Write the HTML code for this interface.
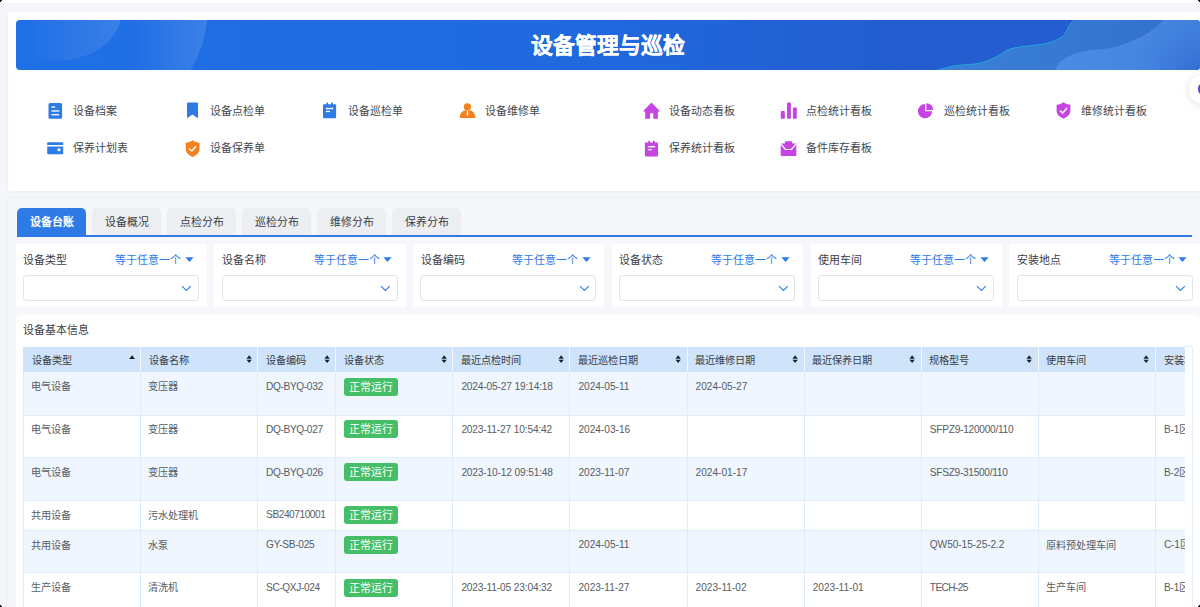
<!DOCTYPE html>
<html lang="zh-CN">
<head>
<meta charset="utf-8">
<title>设备管理与巡检</title>
<style>
*{box-sizing:border-box;margin:0;padding:0}
html,body{width:1200px;height:607px;overflow:hidden;background:#f5f6fa;font-family:"Liberation Sans",sans-serif;color:#333;font-weight:300}
body{position:relative}
.abs{position:absolute}
.topstrip{left:0;top:0;width:1200px;height:3.2px;background:#fff}
.card1{left:7.8px;top:11.7px;width:1200px;height:179.2px;background:#fff;box-shadow:0 1px 4px rgba(0,0,0,0.045)}
.banner{left:15.6px;top:19.5px;width:1184.4px;height:50.8px;border-radius:4px;overflow:hidden;background:linear-gradient(90deg,#1f70e6 0%,#2068de 50%,#235dcf 75%,#235dcf 100%)}
.banner h1{position:absolute;left:0.6px;top:1.6px;width:1184.4px;text-align:center;line-height:50.8px;font-size:21.75px;font-weight:bold;color:#fff;-webkit-text-stroke:0.3px #fff}
.navt{height:20px;line-height:20px;font-size:10.94px;color:#43474f;white-space:nowrap}
.tab{top:208.2px;width:68.8px;height:27px;line-height:28.4px;text-align:center;font-size:10.94px;color:#3b3e45;background:#eceef2;border-radius:5px 5px 0 0;white-space:nowrap}
.tab.act{background:#2e7be6;color:#fff;font-weight:bold}
.tabline{left:17.2px;top:235px;width:1174.5px;height:1.7px;background:#2e7be6}
.fcard{top:244.3px;width:191.4px;height:62.6px;background:#fff}
.flab{left:7.6px;top:5.7px;height:20px;line-height:20px;font-size:10.94px;color:#3b3e45;white-space:nowrap}
.fop{left:99.2px;top:5.7px;height:20px;line-height:20px;font-size:10.94px;color:#2e7be6;white-space:nowrap}
.fsel{left:7.4px;top:31px;width:175.9px;height:25.4px;border:0.8px solid #e0e3e9;border-radius:3.2px;background:#fff}
.card3{left:15.6px;top:315px;width:1184.8px;height:300px;background:#fff;border-radius:4.5px}
.ttl{left:23.4px;top:320.4px;height:20px;line-height:20px;font-size:10.94px;color:#3b3e45;white-space:nowrap}
.tclip{overflow:hidden}
.th{height:25.4px;line-height:27.8px;font-size:10.16px;color:#3a3d44;white-space:nowrap}
.td{height:20px;line-height:20px;font-size:10.16px;color:#585c63;white-space:nowrap}
.lat{margin-top:-0.7px;margin-left:0.9px}
.badge{width:54.2px;height:18px;line-height:18px;border-radius:3px;background:#45be68;color:#fff;font-size:10.94px;text-align:center;white-space:nowrap}
.vline{left:1192.3px;top:346.6px;width:0.8px;height:270px;background:#e4effb}
</style>
</head>
<body>
<div class="abs topstrip"></div>
<div class="abs card1"></div>
<div class="abs banner">
<svg class="abs" style="left:0;top:0" width="1184.4" height="50.8" viewBox="0 0 1184.4 50.8">
<defs>
<linearGradient id="gl1" gradientUnits="userSpaceOnUse" x1="10" y1="0" x2="105" y2="0"><stop offset="0" stop-color="#fff" stop-opacity="0"/><stop offset="1" stop-color="#fff" stop-opacity="0.12"/></linearGradient>
<linearGradient id="gl2" gradientUnits="userSpaceOnUse" x1="115" y1="0" x2="191" y2="0"><stop offset="0" stop-color="#fff" stop-opacity="0"/><stop offset="1" stop-color="#fff" stop-opacity="0.13"/></linearGradient>
<linearGradient id="ga" gradientUnits="userSpaceOnUse" x1="930" y1="50" x2="1150" y2="0"><stop offset="0" stop-color="#3a80d8"/><stop offset="1" stop-color="#3372cd"/></linearGradient>
<linearGradient id="gb" gradientUnits="userSpaceOnUse" x1="1040" y1="0" x2="1184" y2="0"><stop offset="0" stop-color="#4b8be5"/><stop offset="1" stop-color="#4383de"/></linearGradient>
<radialGradient id="gb2" gradientUnits="userSpaceOnUse" cx="1190" cy="62" r="75"><stop offset="0" stop-color="#2f68d2" stop-opacity="1"/><stop offset="1" stop-color="#3a76d8" stop-opacity="0"/></radialGradient>
</defs>
<ellipse cx="94.4" cy="-9.5" rx="97" ry="105" fill="url(#gl2)"/>
<ellipse cx="41.4" cy="-7.5" rx="64" ry="48" fill="url(#gl1)"/>
<path d="M914.4 52.5 C915.4 52.1 916.5 51.4 920.7 50.3 C924.9 49.2 932.4 46.9 939.4 45.7 C946.4 44.5 956.1 44.7 962.7 43.3 C969.3 41.9 974.0 39.8 979.1 37.5 C984.2 35.2 988.1 31.2 993.1 29.3 C998.1 27.4 1003.2 27.3 1009.4 26.3 C1015.6 25.3 1024.2 25.1 1030.4 23.5 C1036.6 21.9 1042.8 19.6 1046.7 16.5 C1050.6 13.4 1051.8 7.5 1053.7 4.8 C1055.7 2.1 1057.1 1.6 1058.4 0.2 C1059.7 -1.2 1060.9 -2.9 1061.4 -3.5 L1190 -5 L1190 60 L900 60 Z" fill="url(#ga)"/>
<path d="M914.4 52.5 C915.4 52.1 916.5 51.4 920.7 50.3 C924.9 49.2 932.4 46.9 939.4 45.7 C946.4 44.5 956.1 44.7 962.7 43.3 C969.3 41.9 974.0 39.8 979.1 37.5 C984.2 35.2 988.1 31.2 993.1 29.3 C998.1 27.4 1003.2 27.3 1009.4 26.3 C1015.6 25.3 1024.2 25.1 1030.4 23.5 C1036.6 21.9 1042.8 19.6 1046.7 16.5 C1050.6 13.4 1051.8 7.5 1053.7 4.8 C1055.7 2.1 1057.1 1.6 1058.4 0.2 C1059.7 -1.2 1060.9 -2.9 1061.4 -3.5" fill="none" stroke="#22a6de" stroke-width="1" stroke-opacity="0.95"/>
<path d="M1038.4 53.5 C1038.6 53.0 1038.7 52.2 1039.7 50.3 C1040.7 48.4 1041.7 44.7 1044.4 42.2 C1047.1 39.7 1051.4 37.1 1056.1 35.2 C1060.8 33.3 1065.8 32.2 1072.4 31.0 C1079.0 29.8 1088.7 29.7 1095.7 28.2 C1102.7 26.8 1108.2 24.8 1114.4 22.3 C1120.6 19.8 1127.7 16.5 1133.1 13.0 C1138.6 9.5 1144.2 3.9 1147.1 1.3 C1150.0 -1.3 1149.9 -1.9 1150.4 -2.5 L1190 -5 L1190 60 Z" fill="url(#gb)"/><path d="M1038.4 53.5 C1038.6 53.0 1038.7 52.2 1039.7 50.3 C1040.7 48.4 1041.7 44.7 1044.4 42.2 C1047.1 39.7 1051.4 37.1 1056.1 35.2 C1060.8 33.3 1065.8 32.2 1072.4 31.0 C1079.0 29.8 1088.7 29.7 1095.7 28.2 C1102.7 26.8 1108.2 24.8 1114.4 22.3 C1120.6 19.8 1127.7 16.5 1133.1 13.0 C1138.6 9.5 1144.2 3.9 1147.1 1.3 C1150.0 -1.3 1149.9 -1.9 1150.4 -2.5 L1190 -5 L1190 60 Z" fill="url(#gb2)"/>
<path d="M1038.4 53.5 C1038.6 53.0 1038.7 52.2 1039.7 50.3 C1040.7 48.4 1041.7 44.7 1044.4 42.2 C1047.1 39.7 1051.4 37.1 1056.1 35.2 C1060.8 33.3 1065.8 32.2 1072.4 31.0 C1079.0 29.8 1088.7 29.7 1095.7 28.2 C1102.7 26.8 1108.2 24.8 1114.4 22.3 C1120.6 19.8 1127.7 16.5 1133.1 13.0 C1138.6 9.5 1144.2 3.9 1147.1 1.3 C1150.0 -1.3 1149.9 -1.9 1150.4 -2.5" fill="none" stroke="#5a9ae8" stroke-width="0.7" stroke-opacity="0.7"/>

</svg>
<h1>设备管理与巡检</h1>
</div>
<svg class="abs" style="left:46.7px;top:102.1px" width="17" height="17" viewBox="0 0 17 17"><g transform="translate(-0.2,0.4)"><rect x="1.7" y="0.6" width="13.6" height="15.7" rx="1.5" fill="#2e7be6"/><rect x="4.6" y="4.0" width="3.8" height="1.3" fill="#fff"/><rect x="4.6" y="7.9" width="7.8" height="1.3" fill="#fff"/><rect x="4.6" y="11.7" width="7.8" height="1.3" fill="#fff"/></g></svg><div class="abs navt" style="left:72.7px;top:100.6px">设备档案</div>
<svg class="abs" style="left:184.0px;top:102.1px" width="17" height="17" viewBox="0 0 17 17"><path d="M3 1.4 Q3 0.6 3.8 0.6 H13.2 Q14 0.6 14 1.4 V16.3 L8.5 12.4 L3 16.3 Z" fill="#2e7be6"/></svg><div class="abs navt" style="left:210.3px;top:100.6px">设备点检单</div>
<svg class="abs" style="left:321.0px;top:102.1px" width="17" height="17" viewBox="0 0 17 17"><g transform="translate(0,0)"><rect x="2" y="2.3" width="13.1" height="14" rx="1" fill="#2e7be6"/><rect x="5.4" y="0.6" width="1.7" height="3" fill="#2e7be6"/><rect x="10.1" y="0.6" width="1.8" height="3" fill="#2e7be6"/><rect x="4.9" y="5.8" width="7.3" height="1.4" fill="#fff"/><rect x="4.9" y="8.8" width="4.1" height="1.3" fill="#fff"/></g></svg><div class="abs navt" style="left:347.7px;top:100.6px">设备巡检单</div>
<svg class="abs" style="left:458.9px;top:102.1px" width="17" height="17" viewBox="0 0 17 17"><circle cx="8.4" cy="4.8" r="3.65" fill="#f5821f"/><path d="M0.7 15.9 C0.7 10.8 3.6 7.9 8.5 7.9 C13.4 7.9 16.3 10.8 16.3 15.9 Q16.3 16.1 16 16.1 H1 Q0.7 16.1 0.7 15.9 Z" fill="#f5821f"/><path d="M7.7 8.2 H9.3 L9 9.3 L9.4 12.7 L8.5 14 L7.6 12.7 L8 9.3 Z" fill="#fff"/></svg><div class="abs navt" style="left:484.9px;top:100.6px">设备维修单</div>
<svg class="abs" style="left:46.5px;top:139.7px" width="17" height="17" viewBox="0 0 17 17"><g transform="translate(-0.3,-0.2)"><path d="M0.5 3.5 Q0.5 2.5 1.5 2.5 H15.5 Q16.5 2.5 16.5 3.5 V5.1 H0.5 Z" fill="#2e7be6"/><path d="M0.5 6.8 H16.5 V13.5 Q16.5 14.5 15.5 14.5 H1.5 Q0.5 14.5 0.5 13.5 Z" fill="#2e7be6"/><rect x="10.9" y="8.7" width="2.8" height="2.6" fill="#fff"/></g></svg><div class="abs navt" style="left:72.7px;top:138.2px">保养计划表</div>
<svg class="abs" style="left:183.8px;top:139.7px" width="17" height="17" viewBox="0 0 17 17"><path d="M8.6 0.3 C6.6 1.9000000000000001 4.2 2.6999999999999997 1.7 2.8 V8.700000000000001 C1.7 12.900000000000002 5.0 15.499999999999998 8.6 16.9 C12.2 15.499999999999998 15.5 12.900000000000002 15.5 8.700000000000001 V2.8 C13.0 2.6999999999999997 10.6 1.9000000000000001 8.6 0.3 Z" fill="#f5821f"/><path d="M5.4 9.0 L7.8 11.0 L11.7 6.5" fill="none" stroke="#fff" stroke-width="1.5" stroke-linecap="round" stroke-linejoin="round"/></svg><div class="abs navt" style="left:210.3px;top:138.2px">设备保养单</div>
<svg class="abs" style="left:642.7px;top:102.1px" width="17" height="17" viewBox="0 0 17 17"><path d="M8.5 0.6 L16.8 8.9 Q17 9.6 16.3 9.6 H14.9 V16.7 H10.3 V12.1 Q10.3 11.3 9.5 11.3 H7.9 Q7.1 11.3 7.1 12.1 V16.7 H2.2 V9.6 H0.7 Q0 9.6 0.2 8.9 Z" fill="#c644e2"/></svg><div class="abs navt" style="left:668.9px;top:100.6px">设备动态看板</div>
<svg class="abs" style="left:780.4px;top:102.1px" width="17" height="17" viewBox="0 0 17 17"><rect x="0.8" y="9" width="4" height="7.8" rx="0.9" fill="#c644e2"/><rect x="7" y="0.4" width="3.9" height="16.4" rx="0.9" fill="#c644e2"/><rect x="12.9" y="5.5" width="3.9" height="11.3" rx="0.9" fill="#c644e2"/></svg><div class="abs navt" style="left:806.1px;top:100.6px">点检统计看板</div>
<svg class="abs" style="left:917.2px;top:102.1px" width="17" height="17" viewBox="0 0 17 17"><path d="M8 9.2 V2.1 A7.1 7.1 0 1 0 15.1 9.2 Z" fill="#c644e2"/><path d="M9.3 7.9 V1.3 A7 6.6 0 0 1 16.3 7.9 Z" fill="#c644e2"/></svg><div class="abs navt" style="left:943.6px;top:100.6px">巡检统计看板</div>
<svg class="abs" style="left:1054.6px;top:102.1px" width="17" height="17" viewBox="0 0 17 17"><path d="M8.5 0.2 C6.5 1.8 4.1 2.6 1.6 2.7 V8.6 C1.6 12.8 4.9 15.299999999999999 8.5 16.7 C12.1 15.299999999999999 15.4 12.8 15.4 8.6 V2.7 C12.9 2.6 10.5 1.8 8.5 0.2 Z" fill="#c644e2"/><path d="M5.3 9.0 L7.7 11.1 L11.6 6.4" fill="none" stroke="#fff" stroke-width="1.5" stroke-linecap="round" stroke-linejoin="round"/></svg><div class="abs navt" style="left:1080.8px;top:100.6px">维修统计看板</div>
<svg class="abs" style="left:642.9px;top:139.7px" width="17" height="17" viewBox="0 0 17 17"><g transform="translate(-0.1,0.2)"><rect x="2" y="2.3" width="13.1" height="14" rx="1" fill="#c644e2"/><rect x="5.4" y="0.6" width="1.7" height="3" fill="#c644e2"/><rect x="10.1" y="0.6" width="1.8" height="3" fill="#c644e2"/><rect x="4.9" y="5.8" width="7.3" height="1.4" fill="#fff"/><rect x="4.9" y="8.8" width="4.1" height="1.3" fill="#fff"/></g></svg><div class="abs navt" style="left:668.9px;top:138.2px">保养统计看板</div>
<svg class="abs" style="left:780.4px;top:139.7px" width="17" height="17" viewBox="0 0 17 17"><path d="M0.7 3.9 Q0.7 3.6 1 3.6 H4.9 V2 Q4.9 1.2 5.7 1.2 H11.4 Q12.2 1.2 12.2 2 V3.6 H16 Q16.3 3.6 16.3 3.9 V14.9 Q16.3 15.9 15.3 15.9 H1.7 Q0.7 15.9 0.7 14.9 Z" fill="#c644e2"/><path d="M0.9 4 L5.5 9.5 H11.4 L16.1 4" fill="none" stroke="#fff" stroke-width="1.2" stroke-linejoin="round"/></svg><div class="abs navt" style="left:806.1px;top:138.2px">备件库存看板</div>

<div class="abs" style="left:7.8px;top:198.8px;width:1200px;height:420px;background:#f6f7fb;box-shadow:0 0 4px rgba(0,0,0,0.05)"></div>
<div class="abs tab act" style="left:17.2px">设备台账</div><div class="abs tab" style="left:92.2px">设备概况</div><div class="abs tab" style="left:167.2px">点检分布</div><div class="abs tab" style="left:242.2px">巡检分布</div><div class="abs tab" style="left:317.2px">维修分布</div><div class="abs tab" style="left:392.2px">保养分布</div>
<div class="abs tabline"></div>
<div class="abs fcard" style="left:15.60px"><div class="abs flab">设备类型</div><div class="abs fop">等于任意一个</div><svg class="abs" style="left:169px;top:13.2px" width="10" height="6" viewBox="0 0 10 6"><path d="M0.4 0.3 H8.6 L4.5 5 Z" fill="#2e7be6"/></svg><div class="abs fsel"><svg class="abs" style="left:157.5px;top:8.6px" width="11" height="7" viewBox="0 0 11 7"><path d="M1 1.2 L5.4 5.4 L9.8 1.2" fill="none" stroke="#2e7be6" stroke-width="1.1"/></svg></div></div>
<div class="abs fcard" style="left:214.35px"><div class="abs flab">设备名称</div><div class="abs fop">等于任意一个</div><svg class="abs" style="left:169px;top:13.2px" width="10" height="6" viewBox="0 0 10 6"><path d="M0.4 0.3 H8.6 L4.5 5 Z" fill="#2e7be6"/></svg><div class="abs fsel"><svg class="abs" style="left:157.5px;top:8.6px" width="11" height="7" viewBox="0 0 11 7"><path d="M1 1.2 L5.4 5.4 L9.8 1.2" fill="none" stroke="#2e7be6" stroke-width="1.1"/></svg></div></div>
<div class="abs fcard" style="left:413.10px"><div class="abs flab">设备编码</div><div class="abs fop">等于任意一个</div><svg class="abs" style="left:169px;top:13.2px" width="10" height="6" viewBox="0 0 10 6"><path d="M0.4 0.3 H8.6 L4.5 5 Z" fill="#2e7be6"/></svg><div class="abs fsel"><svg class="abs" style="left:157.5px;top:8.6px" width="11" height="7" viewBox="0 0 11 7"><path d="M1 1.2 L5.4 5.4 L9.8 1.2" fill="none" stroke="#2e7be6" stroke-width="1.1"/></svg></div></div>
<div class="abs fcard" style="left:611.85px"><div class="abs flab">设备状态</div><div class="abs fop">等于任意一个</div><svg class="abs" style="left:169px;top:13.2px" width="10" height="6" viewBox="0 0 10 6"><path d="M0.4 0.3 H8.6 L4.5 5 Z" fill="#2e7be6"/></svg><div class="abs fsel"><svg class="abs" style="left:157.5px;top:8.6px" width="11" height="7" viewBox="0 0 11 7"><path d="M1 1.2 L5.4 5.4 L9.8 1.2" fill="none" stroke="#2e7be6" stroke-width="1.1"/></svg></div></div>
<div class="abs fcard" style="left:810.60px"><div class="abs flab">使用车间</div><div class="abs fop">等于任意一个</div><svg class="abs" style="left:169px;top:13.2px" width="10" height="6" viewBox="0 0 10 6"><path d="M0.4 0.3 H8.6 L4.5 5 Z" fill="#2e7be6"/></svg><div class="abs fsel"><svg class="abs" style="left:157.5px;top:8.6px" width="11" height="7" viewBox="0 0 11 7"><path d="M1 1.2 L5.4 5.4 L9.8 1.2" fill="none" stroke="#2e7be6" stroke-width="1.1"/></svg></div></div>
<div class="abs fcard" style="left:1009.35px"><div class="abs flab">安装地点</div><div class="abs fop">等于任意一个</div><svg class="abs" style="left:169px;top:13.2px" width="10" height="6" viewBox="0 0 10 6"><path d="M0.4 0.3 H8.6 L4.5 5 Z" fill="#2e7be6"/></svg><div class="abs fsel"><svg class="abs" style="left:157.5px;top:8.6px" width="11" height="7" viewBox="0 0 11 7"><path d="M1 1.2 L5.4 5.4 L9.8 1.2" fill="none" stroke="#2e7be6" stroke-width="1.1"/></svg></div></div>

<div class="abs card3"></div>
<div class="abs ttl">设备基本信息</div>
<div class="abs tclip" style="left:23.3px;top:346.6px;width:1162.1px;height:262.4px"><div class="abs" style="left:0;top:0;width:1300px;height:25.4px;background:#cfe3fa"></div><div class="abs th" style="left:8.3px;top:0">设备类型</div><svg class="abs" style="left:105.4px;top:8.5px" width="7" height="5" viewBox="0 0 7 5"><path d="M0.2 3.9 L3.1 0.3 L6 3.9 Z" fill="#1d1f24"/></svg><div class="abs th" style="left:125.6px;top:0">设备名称</div><svg class="abs" style="left:222.4px;top:8.4px" width="7" height="9" viewBox="0 0 7 9"><path d="M0.5 3.7 L3.15 0.3 L5.8 3.7 Z M0.5 4.7 L3.15 8.1 L5.8 4.7 Z" fill="#1d1f24"/></svg><div class="abs" style="left:116.9px;top:0;width:0.9px;height:25.4px;background:#f3f8ff"></div><div class="abs th" style="left:242.5px;top:0">设备编码</div><svg class="abs" style="left:300.4px;top:8.4px" width="7" height="9" viewBox="0 0 7 9"><path d="M0.5 3.7 L3.15 0.3 L5.8 3.7 Z M0.5 4.7 L3.15 8.1 L5.8 4.7 Z" fill="#1d1f24"/></svg><div class="abs" style="left:233.8px;top:0;width:0.9px;height:25.4px;background:#f3f8ff"></div><div class="abs th" style="left:320.5px;top:0">设备状态</div><svg class="abs" style="left:417.8px;top:8.4px" width="7" height="9" viewBox="0 0 7 9"><path d="M0.5 3.7 L3.15 0.3 L5.8 3.7 Z M0.5 4.7 L3.15 8.1 L5.8 4.7 Z" fill="#1d1f24"/></svg><div class="abs" style="left:311.8px;top:0;width:0.9px;height:25.4px;background:#f3f8ff"></div><div class="abs th" style="left:437.8px;top:0">最近点检时间</div><svg class="abs" style="left:534.8px;top:8.4px" width="7" height="9" viewBox="0 0 7 9"><path d="M0.5 3.7 L3.15 0.3 L5.8 3.7 Z M0.5 4.7 L3.15 8.1 L5.8 4.7 Z" fill="#1d1f24"/></svg><div class="abs" style="left:429.1px;top:0;width:0.9px;height:25.4px;background:#f3f8ff"></div><div class="abs th" style="left:554.9px;top:0">最近巡检日期</div><svg class="abs" style="left:652.0px;top:8.4px" width="7" height="9" viewBox="0 0 7 9"><path d="M0.5 3.7 L3.15 0.3 L5.8 3.7 Z M0.5 4.7 L3.15 8.1 L5.8 4.7 Z" fill="#1d1f24"/></svg><div class="abs" style="left:546.2px;top:0;width:0.9px;height:25.4px;background:#f3f8ff"></div><div class="abs th" style="left:672.0px;top:0">最近维修日期</div><svg class="abs" style="left:769.1px;top:8.4px" width="7" height="9" viewBox="0 0 7 9"><path d="M0.5 3.7 L3.15 0.3 L5.8 3.7 Z M0.5 4.7 L3.15 8.1 L5.8 4.7 Z" fill="#1d1f24"/></svg><div class="abs" style="left:663.3px;top:0;width:0.9px;height:25.4px;background:#f3f8ff"></div><div class="abs th" style="left:789.1px;top:0">最近保养日期</div><svg class="abs" style="left:886.2px;top:8.4px" width="7" height="9" viewBox="0 0 7 9"><path d="M0.5 3.7 L3.15 0.3 L5.8 3.7 Z M0.5 4.7 L3.15 8.1 L5.8 4.7 Z" fill="#1d1f24"/></svg><div class="abs" style="left:780.4px;top:0;width:0.9px;height:25.4px;background:#f3f8ff"></div><div class="abs th" style="left:906.2px;top:0">规格型号</div><svg class="abs" style="left:1003.2px;top:8.4px" width="7" height="9" viewBox="0 0 7 9"><path d="M0.5 3.7 L3.15 0.3 L5.8 3.7 Z M0.5 4.7 L3.15 8.1 L5.8 4.7 Z" fill="#1d1f24"/></svg><div class="abs" style="left:897.5px;top:0;width:0.9px;height:25.4px;background:#f3f8ff"></div><div class="abs th" style="left:1023.2px;top:0">使用车间</div><svg class="abs" style="left:1120.2px;top:8.4px" width="7" height="9" viewBox="0 0 7 9"><path d="M0.5 3.7 L3.15 0.3 L5.8 3.7 Z M0.5 4.7 L3.15 8.1 L5.8 4.7 Z" fill="#1d1f24"/></svg><div class="abs" style="left:1014.5px;top:0;width:0.9px;height:25.4px;background:#f3f8ff"></div><div class="abs th" style="left:1140.3px;top:0">安装地点</div><svg class="abs" style="left:1237.4px;top:8.4px" width="7" height="9" viewBox="0 0 7 9"><path d="M0.5 3.7 L3.15 0.3 L5.8 3.7 Z M0.5 4.7 L3.15 8.1 L5.8 4.7 Z" fill="#1d1f24"/></svg><div class="abs" style="left:1131.6px;top:0;width:0.9px;height:25.4px;background:#f3f8ff"></div><div class="abs" style="left:0;top:25.1px;width:1300px;height:43.9px;background:#eff6fe"></div><div class="abs td" style="left:7.7px;top:30.6px">电气设备</div><div class="abs td" style="left:125.0px;top:30.6px">变压器</div><div class="abs td lat" style="left:241.9px;top:30.6px;letter-spacing:-0.38px">DQ-BYQ-032</div><div class="abs badge" style="left:320.4px;top:31.3px">正常运行</div><div class="abs td lat" style="left:437.2px;top:30.6px;letter-spacing:-0.15px">2024-05-27 19:14:18</div><div class="abs td lat" style="left:554.3px;top:30.6px;letter-spacing:-0.02px">2024-05-11</div><div class="abs td lat" style="left:671.4px;top:30.6px;letter-spacing:-0.02px">2024-05-27</div><div class="abs" style="left:0;top:68.5px;width:1300px;height:43.4px;background:#fff"></div><div class="abs td" style="left:7.7px;top:73.9px">电气设备</div><div class="abs td" style="left:125.0px;top:73.9px">变压器</div><div class="abs td lat" style="left:241.9px;top:73.9px;letter-spacing:-0.38px">DQ-BYQ-027</div><div class="abs badge" style="left:320.4px;top:73.9px">正常运行</div><div class="abs td lat" style="left:437.2px;top:73.9px;letter-spacing:-0.15px">2023-11-27 10:54:42</div><div class="abs td lat" style="left:554.3px;top:73.9px;letter-spacing:-0.02px">2024-03-16</div><div class="abs td lat" style="left:905.6px;top:73.9px;letter-spacing:-0.27px">SFPZ9-120000/110</div><div class="abs td lat" style="left:1139.7px;top:73.9px;letter-spacing:-0.2px">B-1区</div><div class="abs" style="left:0;top:111.4px;width:1300px;height:43.2px;background:#eff6fe"></div><div class="abs td" style="left:7.7px;top:116.6px">电气设备</div><div class="abs td" style="left:125.0px;top:116.6px">变压器</div><div class="abs td lat" style="left:241.9px;top:116.6px;letter-spacing:-0.38px">DQ-BYQ-026</div><div class="abs badge" style="left:320.4px;top:116.7px">正常运行</div><div class="abs td lat" style="left:437.2px;top:116.6px;letter-spacing:-0.15px">2023-10-12 09:51:48</div><div class="abs td lat" style="left:554.3px;top:116.6px;letter-spacing:-0.02px">2023-11-07</div><div class="abs td lat" style="left:671.4px;top:116.6px;letter-spacing:-0.02px">2024-01-17</div><div class="abs td lat" style="left:905.6px;top:116.6px;letter-spacing:-0.3px">SFSZ9-31500/110</div><div class="abs td lat" style="left:1139.7px;top:116.6px;letter-spacing:-0.2px">B-2区</div><div class="abs" style="left:0;top:154.1px;width:1300px;height:30.0px;background:#fff"></div><div class="abs td" style="left:7.7px;top:159.4px">共用设备</div><div class="abs td" style="left:125.0px;top:159.4px">污水处理机</div><div class="abs td lat" style="left:241.9px;top:159.4px;letter-spacing:-0.46px">SB240710001</div><div class="abs badge" style="left:320.4px;top:159.2px">正常运行</div><div class="abs" style="left:0;top:183.6px;width:1300px;height:43.3px;background:#eff6fe"></div><div class="abs td" style="left:7.7px;top:189.2px">共用设备</div><div class="abs td" style="left:125.0px;top:189.2px">水泵</div><div class="abs td lat" style="left:241.9px;top:189.2px;letter-spacing:-0.3px">GY-SB-025</div><div class="abs badge" style="left:320.4px;top:189.2px">正常运行</div><div class="abs td lat" style="left:554.3px;top:189.2px;letter-spacing:-0.02px">2024-05-11</div><div class="abs td lat" style="left:905.6px;top:189.2px;letter-spacing:-0.07px">QW50-15-25-2.2</div><div class="abs td" style="left:1022.6px;top:189.2px">原料预处理车间</div><div class="abs td lat" style="left:1139.7px;top:189.2px;letter-spacing:-0.2px">C-1区</div><div class="abs" style="left:0;top:226.4px;width:1300px;height:43.9px;background:#fff"></div><div class="abs td" style="left:7.7px;top:231.7px">生产设备</div><div class="abs td" style="left:125.0px;top:231.7px">清洗机</div><div class="abs td lat" style="left:241.9px;top:231.7px;letter-spacing:-0.4px">SC-QXJ-024</div><div class="abs badge" style="left:320.4px;top:232.2px">正常运行</div><div class="abs td lat" style="left:437.2px;top:231.7px;letter-spacing:-0.15px">2023-11-05 23:04:32</div><div class="abs td lat" style="left:554.3px;top:231.7px;letter-spacing:-0.02px">2023-11-27</div><div class="abs td lat" style="left:671.4px;top:231.7px;letter-spacing:-0.02px">2023-11-02</div><div class="abs td lat" style="left:788.5px;top:231.7px;letter-spacing:-0.02px">2023-11-01</div><div class="abs td lat" style="left:905.6px;top:231.7px;letter-spacing:-0.6px">TECH-25</div><div class="abs td" style="left:1022.6px;top:231.7px">生产车间</div><div class="abs td lat" style="left:1139.7px;top:231.7px;letter-spacing:-0.2px">B-1区</div><div class="abs" style="left:0;top:68.0px;width:1300px;height:1px;background:#e0edfc"></div><div class="abs" style="left:0;top:110.9px;width:1300px;height:1px;background:#e0edfc"></div><div class="abs" style="left:0;top:153.6px;width:1300px;height:1px;background:#e0edfc"></div><div class="abs" style="left:0;top:183.1px;width:1300px;height:1px;background:#e0edfc"></div><div class="abs" style="left:0;top:225.9px;width:1300px;height:1px;background:#e0edfc"></div><div class="abs" style="left:0;top:269.3px;width:1300px;height:1px;background:#e0edfc"></div><div class="abs" style="left:-0.4px;top:25.4px;width:0.9px;height:300px;background:#deecfb"></div><div class="abs" style="left:116.9px;top:25.4px;width:0.9px;height:300px;background:#deecfb"></div><div class="abs" style="left:233.8px;top:25.4px;width:0.9px;height:300px;background:#deecfb"></div><div class="abs" style="left:311.8px;top:25.4px;width:0.9px;height:300px;background:#deecfb"></div><div class="abs" style="left:429.1px;top:25.4px;width:0.9px;height:300px;background:#deecfb"></div><div class="abs" style="left:546.2px;top:25.4px;width:0.9px;height:300px;background:#deecfb"></div><div class="abs" style="left:663.3px;top:25.4px;width:0.9px;height:300px;background:#deecfb"></div><div class="abs" style="left:780.4px;top:25.4px;width:0.9px;height:300px;background:#deecfb"></div><div class="abs" style="left:897.5px;top:25.4px;width:0.9px;height:300px;background:#deecfb"></div><div class="abs" style="left:1014.5px;top:25.4px;width:0.9px;height:300px;background:#deecfb"></div><div class="abs" style="left:1131.6px;top:25.4px;width:0.9px;height:300px;background:#deecfb"></div></div>
<div class="abs vline"></div>
<div class="abs" style="left:1185.4px;top:346.4px;width:7.6px;height:0.8px;background:#e4effb"></div>
<div class="abs" style="left:1188.7px;top:74.8px;width:28.8px;height:28.8px;border-radius:50%;background:#fff;box-shadow:0 1px 9px rgba(0,0,0,0.13)"></div>
<div class="abs" style="left:1198px;top:83.3px;width:11.4px;height:11.4px;border-radius:50%;background:#4c4cf0"></div>
<svg class="abs" style="left:0;top:0" width="1200" height="607" viewBox="0 0 1200 607"><path d="M0 0 H2 V1 H1 V2 H0 Z M1200 0 H1198 V1 H1199 V2 H1200 Z M0 607 H2 V606 H1 V605 H0 Z M1200 607 H1198 V606 H1199 V605 H1200 Z" fill="#000"/></svg>
</body>
</html>
